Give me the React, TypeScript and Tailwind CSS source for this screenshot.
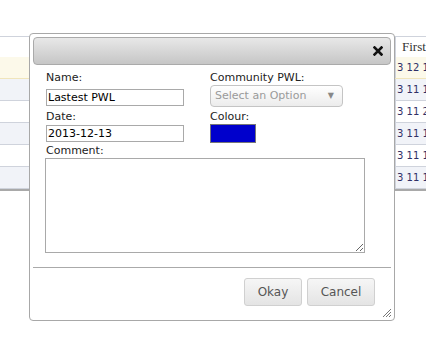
import React from 'react'

interface Row {
  text: string
  bg: string
  line: string
}

const rows: Row[] = [
  { text: '3 12 1', bg: 'bg-[#fcf9ea]', line: 'border-[#f0e5bb]' },
  { text: '3 11 1', bg: 'bg-[#f1f3f8]', line: 'border-[#cfd3dc]' },
  { text: '3 11 2', bg: 'bg-white', line: 'border-[#cfd3dc]' },
  { text: '3 11 1', bg: 'bg-[#f1f3f8]', line: 'border-[#cfd3dc]' },
  { text: '3 11 1', bg: 'bg-white', line: 'border-[#cfd3dc]' },
  { text: '3 11 1', bg: 'bg-[#f1f3f8]', line: 'border-[#cfd3dc]' },
]

function CloseIcon() {
  return (
    <svg width="10" height="10" viewBox="0 0 10 10" className="block">
      <path d="M1.5 1.5 L8.5 8.5 M8.5 1.5 L1.5 8.5" stroke="#111" strokeWidth="2.6" strokeLinecap="square" />
    </svg>
  )
}

function Grip() {
  return (
    <svg width="10" height="10" viewBox="0 0 10 10" className="block">
      <path d="M9 1 L1 9 M9 4 L4 9 M9 7 L7 9" stroke="#777" strokeWidth="1" />
    </svg>
  )
}

export default function App() {
  return (
    <div className="relative h-[353px] w-full overflow-hidden bg-white font-['DejaVu_Sans',sans-serif] text-[11px]">
      {/* Background table */}
      <div className="pt-[36px]">
        <div className="border-t border-[#cfd3dc]">
          <div className="flex h-[20px]">
            <div className="w-[395px] shrink-0" />
            <div className="min-w-0 flex-1 overflow-hidden whitespace-nowrap border-l border-[#cfd3dc] pl-[6px] font-['Liberation_Serif',serif] text-[13px] leading-[20px] text-[#333]">
              First
            </div>
          </div>
          {rows.map((row, i) => (
            <div key={i} className={`flex h-[22px] border-b ${row.bg} ${row.line}`}>
              <div className="w-[395px] shrink-0" />
              <div className="min-w-0 flex-1 overflow-hidden whitespace-nowrap border-l border-[#cfd3dc] pl-[1px] text-[10px] leading-[21px] text-[#2f2f66]">
                {row.text}
              </div>
            </div>
          ))}
          <div className="h-[2px] bg-[#a9a9a9]" />
        </div>
      </div>

      {/* Dialog */}
      <div className="absolute left-[29px] top-[33px] flex h-[288px] w-[366px] flex-col rounded-[4px] border border-[#a8a8a8] bg-white p-[3px]">
        <div className="flex h-[28px] items-center justify-end rounded-[4px] border border-[#aaaaaa] bg-linear-to-b from-[#e8e8e8] to-[#c6c6c6] pr-[7px]">
          <CloseIcon />
        </div>

        <div className="flex flex-col px-[12px] text-[#222]">
          <div className="flex items-start">
            <div className="flex w-[165px] shrink-0 flex-col pl-[1px]">
              <label className="mt-[6px] h-[14px] leading-[14px]">Name:</label>
              <input
                defaultValue="Lastest PWL"
                className="mt-[4px] h-[17px] w-[138px] border border-[#a9a9a9] px-[1px] text-[11px] leading-[15px] text-black outline-none"
              />
              <label className="mt-[4px] h-[14px] leading-[14px]">Date:</label>
              <input
                defaultValue="2013-12-13"
                className="mt-[1px] h-[17px] w-[138px] border border-[#a9a9a9] px-[1px] text-[11px] leading-[15px] text-black outline-none"
              />
              <label className="mt-[2px] h-[14px] leading-[14px]">Comment:</label>
            </div>
            <div className="flex flex-col">
              <label className="mt-[6px] h-[14px] leading-[14px]">Community PWL:</label>
              <div className="flex h-[22px] w-[133px] items-center justify-between rounded-[4px] border border-[#c4c4c4] bg-linear-to-b from-white to-[#ececec] pl-[4px] pr-[8px] text-[#9a9a9a]">
                <span>Select an Option</span>
                <span className="text-[8px] text-[#888]">▼</span>
              </div>
              <label className="mt-[3px] h-[14px] leading-[14px]">Colour:</label>
              <div className="h-[19px] w-[46px] border border-[#777] bg-[#0000cc]" />
            </div>
          </div>
          <textarea className="h-[95px] w-[320px] border border-[#a9a9a9] outline-none" />
        </div>

        <div className="mt-[14px] border-t border-[#aaaaaa]" />

        <div className="mt-[10px] flex justify-end gap-[5px] pr-[16px]">
          <button className="h-[28px] w-[58px] rounded-[3px] border border-[#d0d0d0] bg-linear-to-b from-[#f6f6f6] to-[#e4e4e4] text-[12px] text-[#555]">
            Okay
          </button>
          <button className="h-[28px] w-[68px] rounded-[3px] border border-[#d0d0d0] bg-linear-to-b from-[#f6f6f6] to-[#e4e4e4] text-[12px] text-[#555]">
            Cancel
          </button>
        </div>

        <div className="absolute bottom-[2px] right-[2px]">
          <Grip />
        </div>
      </div>
    </div>
  )
}
